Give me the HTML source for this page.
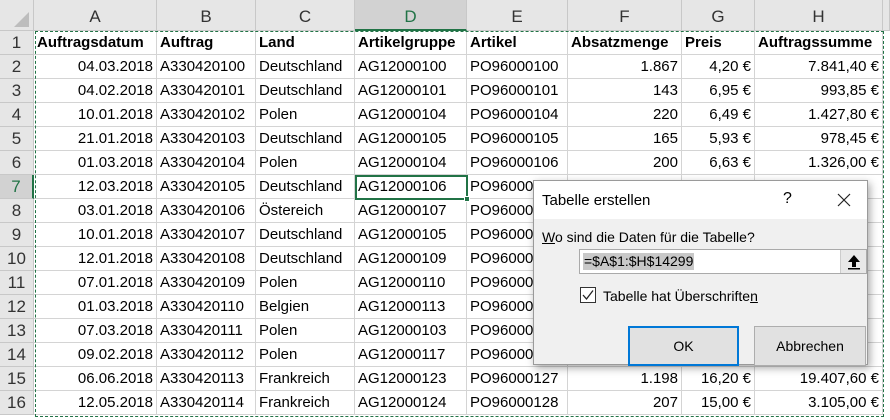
<!DOCTYPE html>
<html><head><meta charset="utf-8"><style>
*{box-sizing:border-box;margin:0;padding:0}
body{width:890px;height:420px;overflow:hidden;background:#fff;font-family:"Liberation Sans",sans-serif;font-size:15px;color:#000;position:relative}
.c{position:absolute;height:24px;line-height:24px;border-right:1px solid #d4d4d4;border-bottom:1px solid #d4d4d4;padding:0 3px;white-space:nowrap;overflow:hidden}
.r{text-align:right}
.h{position:absolute;background:#e6e6e6;color:#333;text-align:center;border-right:1px solid #c8c8c8;border-bottom:1px solid #c8c8c8;font-size:17px}
.b{font-weight:bold}
</style></head><body>
<div id="g"></div>
<script>
var X=[34,157,256,355,467,568,682,755,883];
var L="ABCDEFGH";
var data=[
["Auftragsdatum","Auftrag","Land","Artikelgruppe","Artikel","Absatzmenge","Preis","Auftragssumme"],
["04.03.2018","A330420100","Deutschland","AG12000100","PO96000100","1.867","4,20 €","7.841,40 €"],
["04.02.2018","A330420101","Deutschland","AG12000101","PO96000101","143","6,95 €","993,85 €"],
["10.01.2018","A330420102","Polen","AG12000104","PO96000104","220","6,49 €","1.427,80 €"],
["21.01.2018","A330420103","Deutschland","AG12000105","PO96000105","165","5,93 €","978,45 €"],
["01.03.2018","A330420104","Polen","AG12000104","PO96000106","200","6,63 €","1.326,00 €"],
["12.03.2018","A330420105","Deutschland","AG12000106","PO96000","","",""],
["03.01.2018","A330420106","Östereich","AG12000107","PO96000","","",""],
["10.01.2018","A330420107","Deutschland","AG12000105","PO96000","","",""],
["12.01.2018","A330420108","Deutschland","AG12000109","PO96000","","",""],
["07.01.2018","A330420109","Polen","AG12000110","PO96000","","",""],
["01.03.2018","A330420110","Belgien","AG12000113","PO96000","","",""],
["07.03.2018","A330420111","Polen","AG12000103","PO96000","","",""],
["09.02.2018","A330420112","Polen","AG12000117","PO96000","","",""],
["06.06.2018","A330420113","Frankreich","AG12000123","PO96000127","1.198","16,20 €","19.407,60 €"],
["12.05.2018","A330420114","Frankreich","AG12000124","PO96000128","207","15,00 €","3.105,00 €"]];
var h='';
h+='<div class="h" style="left:0;top:0;width:34px;height:31px"><svg width="34" height="31" style="position:absolute;left:0;top:0"><polygon points="29,12 29,27 14,27" fill="#bdbdbd"/></svg></div>';
for(var i=0;i<8;i++){var sel=i==3;h+='<div class="h" style="left:'+X[i]+'px;top:0;width:'+(X[i+1]-X[i])+'px;height:31px;line-height:33px;'+(sel?'background:#d2d2d2;color:#217346;border-bottom:2px solid #217346':'')+'">'+L[i]+'</div>';}
h+='<div class="h" style="left:883px;top:0;width:7px;height:31px"></div>';
for(var r=0;r<16;r++){var y=31+r*24;var sel=r==6;
h+='<div class="h" style="left:0;top:'+y+'px;width:34px;height:24px;line-height:24px;'+(sel?'background:#d2d2d2;color:#217346;border-right:2px solid #217346':'')+'">'+(r+1)+'</div>';
for(var i=0;i<8;i++){var t=data[r][i];var right=(r>0&&(i==0||i>=5));
h+='<div class="c'+(right?' r':'')+(r==0?' b':'')+'" style="left:'+X[i]+'px;top:'+y+'px;width:'+(X[i+1]-X[i])+'px">'+t+'</div>';}}
h+='<div style="position:absolute;left:35px;top:31px;width:849px;height:386px;border:1.5px dashed #217346"></div>';
h+='<div style="position:absolute;left:355px;top:175px;width:113px;height:25px;border:2px solid #217346"></div><div style="position:absolute;left:464px;top:196px;width:6px;height:6px;background:#217346;border:1px solid #fff"></div>';
document.getElementById('g').innerHTML=h;
</script>
<div style="position:absolute;left:533px;top:180px;width:335px;height:185px;background:#f0f0f0;border:1px solid #9a9a9a;box-shadow:2px 3px 8px rgba(0,0,0,.35);font-size:14px">
<div style="height:38px;background:#fff;position:relative">
<span style="position:absolute;left:8px;top:11px;font-size:15px">Tabelle erstellen</span>
<span style="position:absolute;left:249px;top:9px;font-size:16px">?</span>
<svg style="position:absolute;left:303px;top:12px" width="14" height="14"><path d="M1 1L13 13M13 1L1 13" stroke="#222" stroke-width="1.2"/></svg>
</div>
<div style="position:absolute;left:8px;top:48px"><u>W</u>o sind die Daten für die Tabelle?</div>
<div style="position:absolute;left:45px;top:68px;width:288px;height:25px;background:#fff;border:1px solid #aaa">
<span style="position:absolute;left:3px;top:3px;background:#c8c8c8;line-height:17px;padding:0 1px">=$A$1:$H$14299</span>
<div style="position:absolute;right:0;top:0;width:26px;height:23px;background:#e8e8e8;border-left:1px solid #ccc"><svg width="26" height="23"><path d="M13 5L7 12H11V17H15V12H19Z" fill="#000"/><rect x="7" y="18" width="12" height="1.5" fill="#000"/></svg></div>
</div>
<div style="position:absolute;left:46px;top:106px;width:16px;height:16px;border:1px solid #333;background:#fff"><svg width="14" height="14"><path d="M2 7L5.5 11L12 2.5" stroke="#222" stroke-width="1.3" fill="none"/></svg></div>
<div style="position:absolute;left:69px;top:107px">Tabelle hat Überschrifte<u>n</u></div>
<div style="position:absolute;left:94px;top:145px;width:111px;height:40px;border:2px solid #0078d7;background:#e1e1e1;text-align:center;line-height:36px">OK</div>
<div style="position:absolute;left:220px;top:145px;width:112px;height:40px;border:1px solid #adadad;background:#e1e1e1;text-align:center;line-height:38px">Abbrechen</div>
</div>
</body></html>
